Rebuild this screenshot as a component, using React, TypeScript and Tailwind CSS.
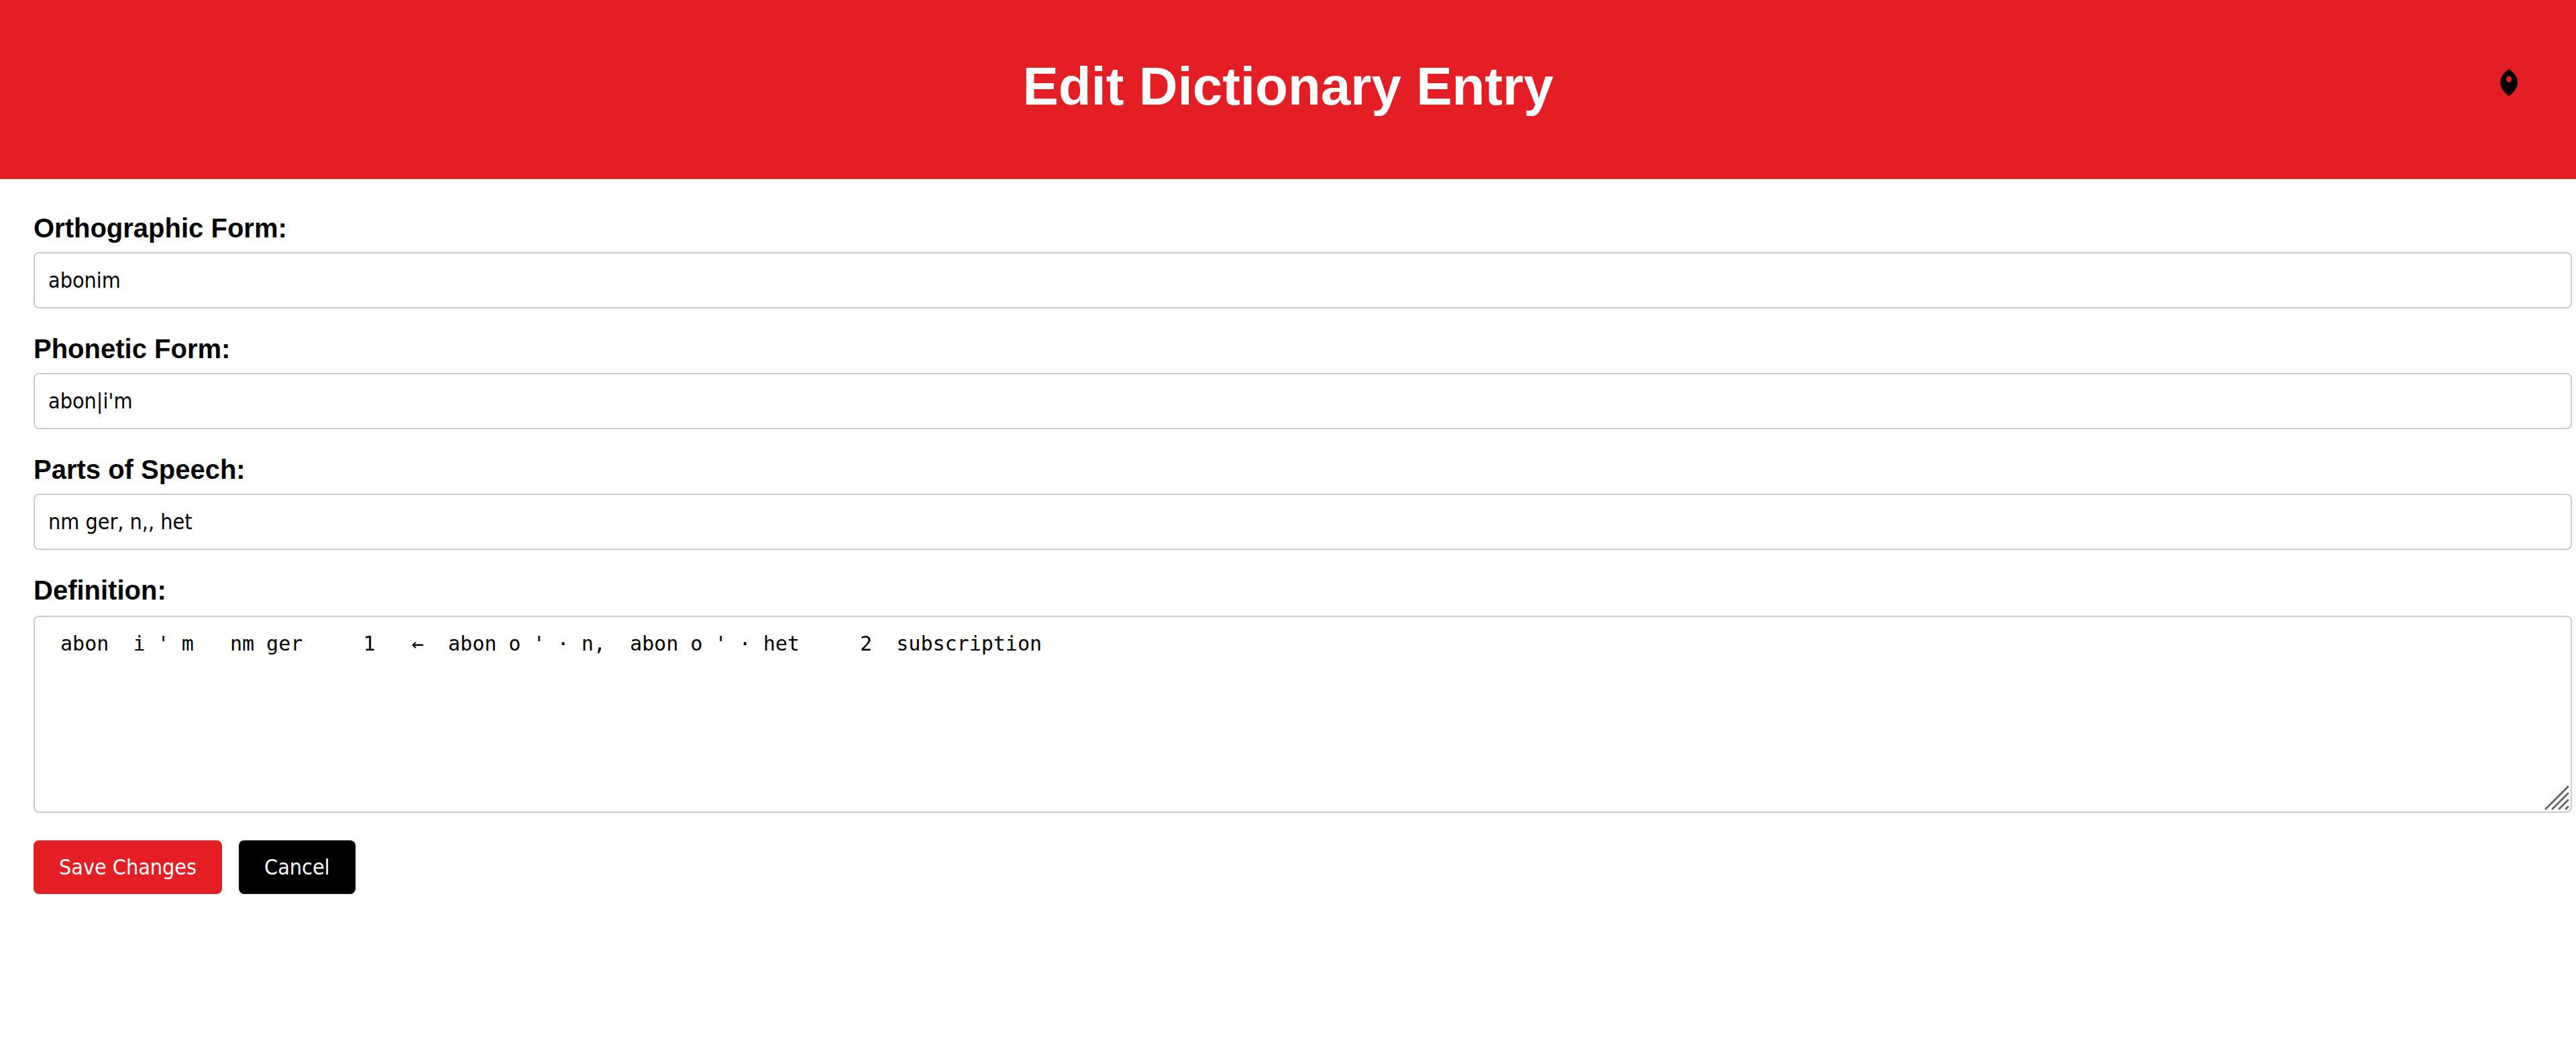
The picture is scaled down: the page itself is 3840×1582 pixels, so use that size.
import React from "react";

const fields = [
  { id: "orthographic", label: "Orthographic Form:", value: "abonim" },
  { id: "phonetic", label: "Phonetic Form:", value: "abon|i'm" },
  { id: "parts", label: "Parts of Speech:", value: "nm ger, n,, het" },
];

const definition =
  " abon  i ' m   nm ger     1   ←  abon o ' · n,  abon o ' · het     2  subscription";

function Leaf() {
  return (
    <svg width="26" height="40" viewBox="0 0 26 40" aria-hidden="true">
      <path
        fillRule="evenodd"
        fill="#000"
        d="M13 0C20 4 26 12 26 20C26 28 20 35 13 40C6 35 0 28 0 20C0 12 6 4 13 0ZM13 10.5C10.8 10.5 9 12.600 9 15.200C9 17.800 10.8 19.800 13 19.800C15.200 19.800 17 17.800 17 15.200C17 12.600 15.200 10.5 13 10.5Z"
      />
    </svg>
  );
}

export default function App() {
  return (
    <div className="bg-white font-['Liberation_Sans',sans-serif] text-black">
      <header className="relative bg-[#e41e25] pt-[83px] pb-[92px] text-center text-white">
        <h1 className="text-[80px] leading-[92px] font-bold">Edit Dictionary Entry</h1>
        <button type="button" aria-label="Menu" className="absolute top-[103px] right-[87px]">
          <Leaf />
        </button>
      </header>
      <form className="flex flex-col items-stretch pt-[50px] pr-[6px] pl-[50px]" onSubmit={(e) => e.preventDefault()}>
        {fields.map((f) => (
          <div key={f.id} className="mb-[37px] flex flex-col gap-[13px]">
            <label htmlFor={f.id} className="text-[40px] leading-[46px] font-bold">
              {f.label}
            </label>
            <input
              id={f.id}
              type="text"
              defaultValue={f.value}
              className="h-[84px] w-full rounded-lg border-2 border-[#ccc] bg-white px-5 font-['DejaVu_Sans_Condensed','Noto_Sans',sans-serif] text-[32px]"
            />
          </div>
        ))}
        <div className="flex flex-col gap-[15px]">
          <label htmlFor="definition" className="text-[40px] leading-[46px] font-bold">
            Definition:
          </label>
          <div className="relative flex">
            <textarea
              id="definition"
              defaultValue={definition}
              className="h-[294px] w-full resize-none rounded-lg border-2 border-[#ccc] bg-white px-5 py-5 font-['DejaVu_Sans_Mono','Liberation_Mono',monospace] text-[30px] leading-[40px]"
            />
            <svg
              className="pointer-events-none absolute right-1 bottom-1"
              width="38"
              height="38"
              viewBox="0 0 38 38"
              stroke="#666"
              strokeWidth="3"
              strokeLinecap="round"
              aria-hidden="true"
            >
              <path d="M3 36L36 3M13 36L36 13M23 36L36 23M33 36L36 33" />
            </svg>
          </div>
        </div>
        <div className="mt-[41px] flex gap-[25px] font-['DejaVu_Sans_Condensed','Noto_Sans',sans-serif] text-[32px] text-white">
          <button type="submit" className="h-20 rounded-lg bg-[#e41e25] px-[38px]">
            Save Changes
          </button>
          <button type="button" className="h-20 rounded-lg bg-black px-[38px]">
            Cancel
          </button>
        </div>
      </form>
    </div>
  );
}
